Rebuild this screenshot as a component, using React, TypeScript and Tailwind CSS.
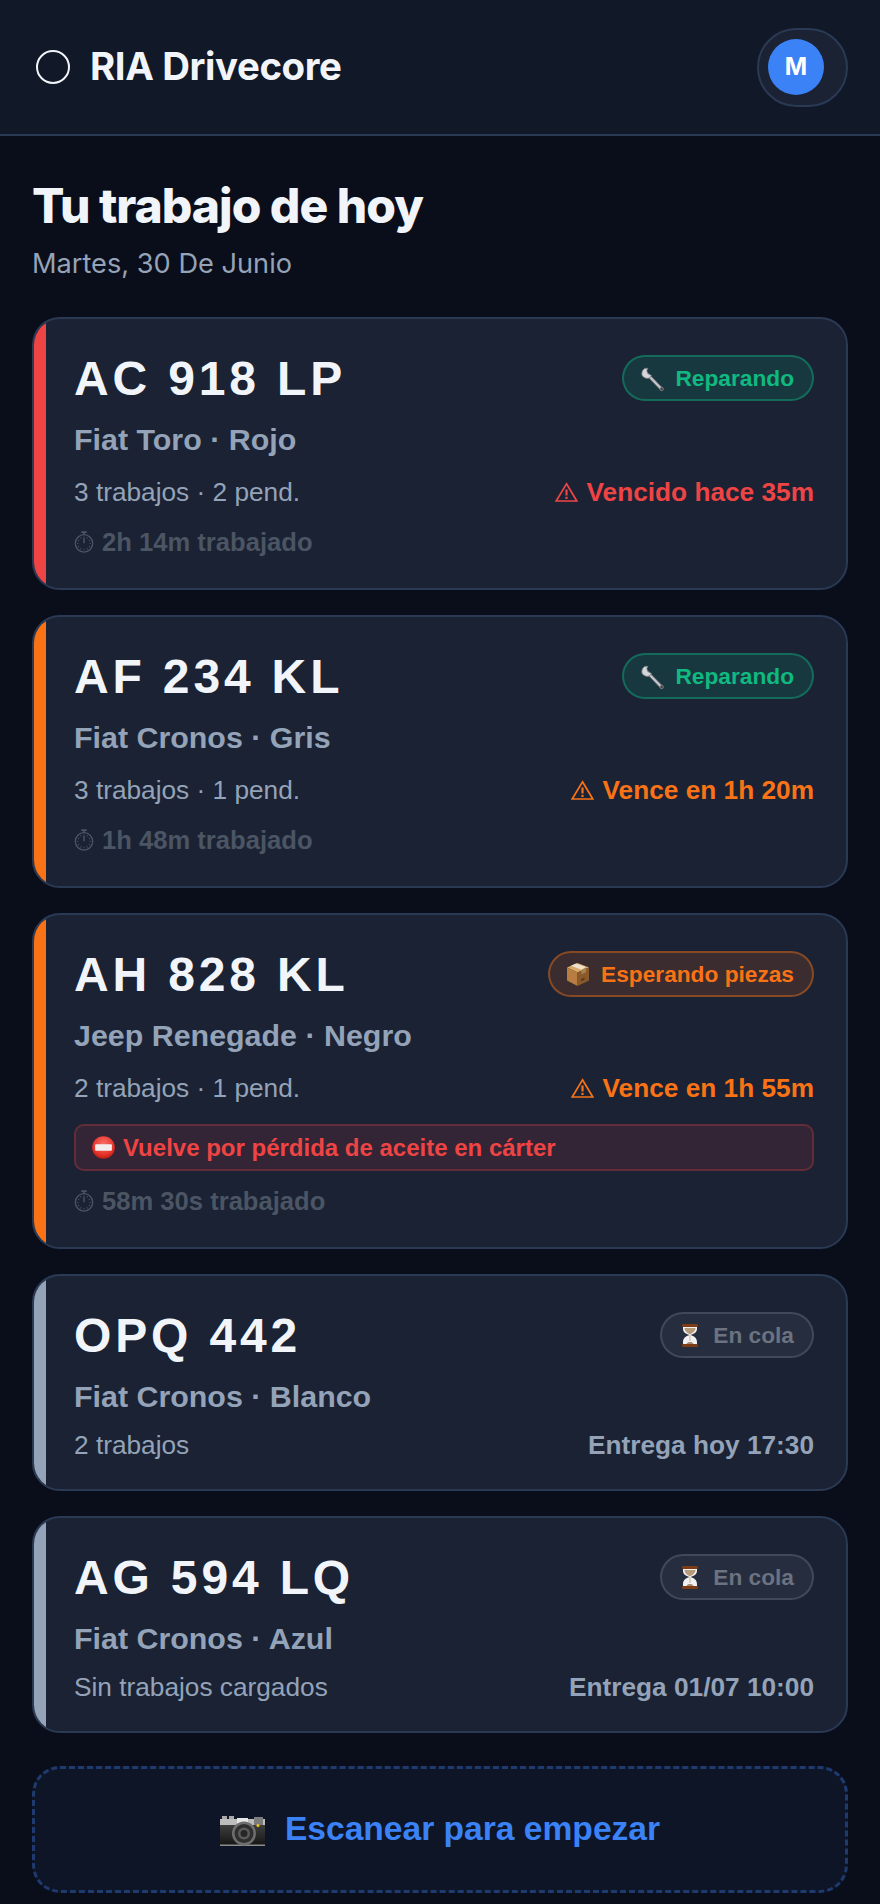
import type { ReactNode } from "react";

function WrenchIcon() {
  return (
    <svg viewBox="0 0 24 24" className="h-6 w-6 overflow-visible">
      <path d="M7.5 8.5 L21.5 23" stroke="#5c5f66" strokeWidth="3.8" strokeLinecap="round" />
      <path d="M7.5 8.5 L21.5 23" stroke="#c3c5ca" strokeWidth="2.2" strokeLinecap="round" />
      <path d="M8 2.4 A5 5 0 1 0 11.4 9.4 L7.8 7.6 L6.8 4.4 Z" fill="#d4d6da" stroke="#74777e" strokeWidth="0.8" strokeLinejoin="round" />
      <circle cx="21.7" cy="23" r="1.7" fill="#4a3f3f" stroke="#8c8c92" strokeWidth="0.7" />
    </svg>
  );
}

function BoxIcon() {
  return (
    <svg viewBox="0 0 24 24" className="h-6 w-6 overflow-visible">
      <path d="M1 5.5 L11.5 1 L23 5.5 L11.5 10.5 Z" fill="#d7a869" />
      <path d="M5 3.8 L10 1.6 L20 5 L15.5 7.8 Z" fill="#eee2cc" />
      <path d="M11.5 10.5 L11.5 24 L1 18.5 L1 5.5 Z" fill="#b87d41" />
      <path d="M11.5 10.5 L23 5.5 L23 18.5 L11.5 24 Z" fill="#8a5a2c" />
      <path d="M15.5 8 L20 5.6 L20 10 L15.5 12.5 Z" fill="#a9814f" />
      <path d="M15 19.5 L18.5 18 V15.5 L15 17 Z" fill="#5e3c1c" />
    </svg>
  );
}

function HourglassIcon() {
  return (
    <svg viewBox="0 0 24 24" className="h-6 w-6 overflow-visible">
      <path d="M5 3 H19 V6 C19 10 14.5 11 13 12 C14.5 13 19 14 19 19 V22 H5 V19 C5 14 9.5 13 11 12 C9.5 11 5 10 5 6 Z" fill="#f1f1f3" />
      <path d="M6.5 5 H17.5 C17.5 9 13 10.5 12 11.5 C11 10.5 6.5 9 6.5 5 Z" fill="#b79a79" />
      <path d="M12 12 V18" stroke="#c9a27a" strokeWidth="0.8" />
      <path d="M8.5 20.7 C10 18.8 14 18.8 15.5 20.7 Z" fill="#8c6a48" />
      <rect x="4" y="1" width="16" height="3" rx="1.2" fill="#7c3d16" />
      <rect x="4" y="21" width="16" height="3" rx="1.2" fill="#7c3d16" />
    </svg>
  );
}

function NoEntryIcon() {
  return (
    <svg viewBox="0 0 22 22" className="h-[23px] w-[23px] shrink-0">
      <defs>
        <radialGradient id="ne" cx="50%" cy="35%" r="70%">
          <stop offset="0%" stopColor="#f8736a" />
          <stop offset="65%" stopColor="#e8352a" />
          <stop offset="100%" stopColor="#b3160f" />
        </radialGradient>
      </defs>
      <circle cx="11" cy="11" r="10.8" fill="url(#ne)" />
      <rect x="3" y="8" width="16" height="6" rx="0.8" fill="#f4eeee" />
    </svg>
  );
}

function CameraIcon() {
  return (
    <svg viewBox="0 0 45 30" className="mt-[3px] h-[30px] w-[45px] shrink-0">
      <defs>
        <linearGradient id="cam" x1="0" y1="0" x2="0" y2="1">
          <stop offset="0%" stopColor="#3e3e3e" />
          <stop offset="100%" stopColor="#161616" />
        </linearGradient>
      </defs>
      <rect x="2" y="0" width="5" height="4" fill="#a9a9a9" />
      <rect x="9" y="0" width="5" height="4" fill="#a9a9a9" />
      <rect x="0" y="3" width="45" height="7" fill="#bdbdbd" />
      <rect x="17" y="2" width="11" height="6" fill="#e6e6e6" />
      <rect x="34" y="1" width="9" height="8" fill="#7d7d7d" />
      <rect x="0" y="9" width="45" height="20" fill="url(#cam)" />
      <rect x="0" y="28.5" width="45" height="1.5" fill="#8d8d8d" />
      <circle cx="24" cy="17.5" r="12" fill="#6e6e6e" />
      <circle cx="24" cy="17.5" r="9.5" fill="#2f2f2f" />
      <circle cx="24" cy="17.5" r="6" fill="#5b5b5b" />
      <circle cx="24" cy="17.5" r="3.5" fill="#262626" />
      <circle cx="38" cy="9.5" r="1.5" fill="#f5c518" />
    </svg>
  );
}

function WarnIcon() {
  return (
    <svg viewBox="0 0 23 20" className="h-5 w-[23px] shrink-0" fill="none" stroke="currentColor">
      <path d="M11.5 1.8 L21.8 19 H1.2 Z" strokeWidth="1.7" strokeLinejoin="miter" />
      <path d="M11.5 7.5 V13.5" strokeWidth="2.2" />
      <path d="M11.5 14.8 V17" strokeWidth="2.2" />
    </svg>
  );
}

function TimerIcon() {
  const ticks = [0, 30, 60, 90, 120, 150, 180, 210, 240, 270, 300, 330];
  return (
    <svg viewBox="0 0 22 24" className="h-[22px] w-5 shrink-0 mr-[2px]" fill="none" stroke="#4b5563">
      <path d="M8 1.2 H14" strokeWidth="1.8" />
      <path d="M11 1.5 V4" strokeWidth="1.8" />
      <circle cx="11" cy="13.5" r="9.6" strokeWidth="1.4" />
      {ticks.map((a) => (
        <path key={a} d="M11 5.8 V7.4" strokeWidth="1" transform={`rotate(${a} 11 13.5)`} />
      ))}
      <path d="M11 13.5 V7.5" strokeWidth="1.6" />
    </svg>
  );
}

type Badge = { icon: ReactNode; label: string; cls: string };

type Card = {
  plate: string;
  model: string;
  meta: string;
  bar: string;
  badge: Badge;
  due: string;
  dueCls: string;
  warn?: boolean;
  note?: string;
  timer?: string;
};

const reparando: Badge = { icon: <WrenchIcon />, label: "Reparando", cls: "border-[#10b98166] bg-[#10b98126] text-[#10b981]" };
const piezas: Badge = { icon: <BoxIcon />, label: "Esperando piezas", cls: "border-[#f9731666] bg-[#f9731626] text-[#f97316]" };
const cola: Badge = { icon: <HourglassIcon />, label: "En cola", cls: "border-[#6b728066] bg-[#6b728026] text-[#6b7280]" };

const cards: Card[] = [
  { plate: "AC 918 LP", model: "Fiat Toro · Rojo", meta: "3 trabajos · 2 pend.", bar: "bg-[#ef4444]", badge: reparando, due: "Vencido hace 35m", dueCls: "text-[#ef4444]", warn: true, timer: "2h 14m trabajado" },
  { plate: "AF 234 KL", model: "Fiat Cronos · Gris", meta: "3 trabajos · 1 pend.", bar: "bg-[#f97316]", badge: reparando, due: "Vence en 1h 20m", dueCls: "text-[#f97316]", warn: true, timer: "1h 48m trabajado" },
  { plate: "AH 828 KL", model: "Jeep Renegade · Negro", meta: "2 trabajos · 1 pend.", bar: "bg-[#f97316]", badge: piezas, due: "Vence en 1h 55m", dueCls: "text-[#f97316]", warn: true, note: "Vuelve por pérdida de aceite en cárter", timer: "58m 30s trabajado" },
  { plate: "OPQ 442", model: "Fiat Cronos · Blanco", meta: "2 trabajos", bar: "bg-[#94a3b8]", badge: cola, due: "Entrega hoy 17:30", dueCls: "text-[#94a3b8]" },
  { plate: "AG 594 LQ", model: "Fiat Cronos · Azul", meta: "Sin trabajos cargados", bar: "bg-[#94a3b8]", badge: cola, due: "Entrega 01/07 10:00", dueCls: "text-[#94a3b8]" },
];

function WorkCard({ c }: { c: Card }) {
  return (
    <div className="flex overflow-hidden rounded-[28px] border-2 border-[#2a3a55] bg-[#1a2234]">
      <div className={`w-3 shrink-0 ${c.bar}`} />
      <div className={`flex min-w-0 flex-1 flex-col pt-[30px] pr-8 pl-7 ${c.timer ? "pb-[25px]" : "pb-[29px]"}`}>
        <div className="flex items-start justify-between">
          <span className="mt-[2px] text-[48px] leading-[56px] font-bold tracking-[3.84px] text-[#f1f5f9]">{c.plate}</span>
          <span className={`mt-[6px] flex h-[46px] items-center gap-[11px] rounded-full border-2 pr-[18px] pl-4 text-[22.7px] font-bold ${c.badge.cls}`}>
            {c.badge.icon}
            <span>{c.badge.label}</span>
          </span>
        </div>
        <div className="mt-[14px] text-[30.4px] leading-9 font-bold text-[#94a3b8]">{c.model}</div>
        <div className={`flex h-[30px] items-center justify-between ${c.timer ? "mt-5" : "mt-4"}`}>
          <span className="text-[26.24px] leading-[30px] text-[#94a3b8]">{c.meta}</span>
          <span className={`flex items-center gap-[9px] text-[26.24px] leading-[30px] font-bold ${c.dueCls}`}>
            {c.warn && <WarnIcon />}
            {c.due}
          </span>
        </div>
        {c.note && (
          <div className="mt-[21px] flex h-[47px] items-center gap-2 rounded-[10px] border-2 border-[#ef444440] bg-[#ef44441f] pl-4 text-[24px] font-bold text-[#ef4444]">
            <NoEntryIcon />
            {c.note}
          </div>
        )}
        {c.timer && (
          <div className={`mb-[2px] flex items-center gap-[6px] text-[25.6px] leading-[38px] font-bold text-[#4b5563] ${c.note ? "mt-[11px]" : "mt-4"}`}>
            <TimerIcon />
            {c.timer}
          </div>
        )}
      </div>
    </div>
  );
}

export default function App() {
  return (
    <div className="min-h-[1904px] w-[880px] bg-[#0a0e1a] font-['Liberation_Sans',Arial,sans-serif]">
      <header className="flex h-[136px] items-center justify-between border-b-2 border-[#2a3a55] bg-[#111827] pr-8 pl-9 font-['Inter',sans-serif]">
        <div className="flex items-center gap-5">
          <span className="h-[34px] w-[34px] rounded-full border-2 border-[#f1f5f9]" />
          <span className="text-[38.4px] font-bold tracking-[-0.4px] text-[#f1f5f9]">RIA Drivecore</span>
        </div>
        <div className="flex h-[79px] w-[91px] items-center rounded-full border-2 border-[#2a3a55] bg-[#1a2234] pl-[9px]">
          <span className="flex h-14 w-14 items-center justify-center rounded-full bg-[#3b82f6] text-[24px] font-bold text-white">M</span>
        </div>
      </header>
      <main className="flex flex-col gap-[25px] px-8 pt-10">
        <div className="mb-3 font-['Inter',sans-serif]">
          <h1 className="text-[48px] leading-[60px] font-extrabold tracking-[-1px] text-[#f1f5f9]">Tu trabajo de hoy</h1>
          <p className="mt-[11px] mb-[-1px] text-[27.2px] leading-[34px] text-[#94a3b8]">Martes, 30 De Junio</p>
        </div>
        {cards.map((c) => (
          <WorkCard key={c.plate} c={c} />
        ))}
        <button className="mt-2 flex h-[127px] items-center justify-center gap-5 rounded-[28px] border-[3px] border-dashed border-[#1e3a6e] bg-[#0d1526] text-[33.6px] font-bold text-[#3b82f6]">
          <CameraIcon />
          <span>Escanear para empezar</span>
        </button>
      </main>
    </div>
  );
}
